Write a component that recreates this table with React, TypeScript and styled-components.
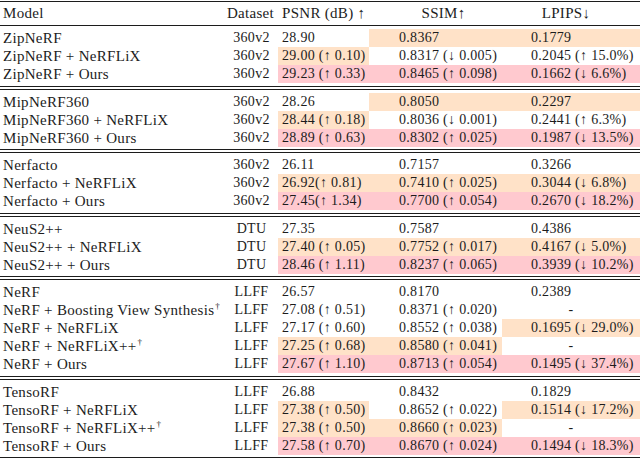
import React from 'react';
import styled, { createGlobalStyle } from 'styled-components';

const GlobalStyle = createGlobalStyle`
  body {
    margin: 0;
    background: #fff;
  }
`;

type Tone = 'n' | 'o' | 'p';

const toneColor = (t: Tone) => (t === 'o' ? '#ffe2c8' : t === 'p' ? '#ffc9cf' : 'transparent');

const COLS = '225px 53px 91px 133px 138px';

const Table = styled.div`
  width: 640px;
  padding-top: 1px;
  font-family: 'Liberation Serif', 'Times New Roman', serif;
  font-size: 14px;
  letter-spacing: 0.3px;
  color: #1c1c1c;
`;

const HeadRow = styled.div`
  display: grid;
  grid-template-columns: ${COLS};
  height: 23px;
  line-height: 23px;
  font-size: 15px;
  border-top: 1.5px solid #1c1c1c;
  border-bottom: 1px solid #1c1c1c;
`;

const Group = styled.div`
  padding: 3px 0 2.5px;
`;

const Divider = styled.div`
  height: 2px;
  border-top: 1px solid #1c1c1c;
  border-bottom: 1px solid #1c1c1c;
`;

const BottomRule = styled.div`
  border-top: 1.5px solid #1c1c1c;
`;

const Row = styled.div`
  display: grid;
  grid-template-columns: ${COLS};
  height: 18px;
  line-height: 18px;
`;

const ModelCell = styled.div`
  padding-left: 3px;
  font-size: 15px;
  white-space: nowrap;
`;

const SetCell = styled.div`
  text-align: center;
  white-space: nowrap;
`;

const ValueCell = styled.div<{ $tone?: Tone; $pad: number; $center?: boolean }>`
  background: ${p => toneColor(p.$tone ?? 'n')};
  padding-left: ${p => (p.$center ? 0 : p.$pad)}px;
  text-align: ${p => (p.$center ? 'center' : 'left')};
  white-space: nowrap;
`;

const HeadValue = styled.div<{ $center?: boolean; $shift?: number }>`
  padding-left: ${p => (p.$center ? 0 : 4)}px;
  text-align: ${p => (p.$center ? 'center' : 'left')};
  transform: translateX(${p => p.$shift ?? 0}px);
  white-space: nowrap;
`;

const Dag = styled.sup`
  font-size: 9px;
  line-height: 0;
  vertical-align: 6px;
  margin-left: 1px;
`;

type Entry = {
  model: React.ReactNode;
  set: string;
  psnr: [string, Tone];
  ssim: [string, Tone];
  lpips: [string, Tone];
};

const groups: Entry[][] = [
  [
    { model: 'ZipNeRF', set: '360v2', psnr: ['28.90', 'n'], ssim: ['0.8367', 'o'], lpips: ['0.1779', 'o'] },
    { model: 'ZipNeRF + NeRFLiX', set: '360v2', psnr: ['29.00 (↑ 0.10)', 'o'], ssim: ['0.8317 (↓ 0.005)', 'n'], lpips: ['0.2045 (↑ 15.0%)', 'n'] },
    { model: 'ZipNeRF + Ours', set: '360v2', psnr: ['29.23 (↑ 0.33)', 'p'], ssim: ['0.8465 (↑ 0.098)', 'p'], lpips: ['0.1662 (↓ 6.6%)', 'p'] },
  ],
  [
    { model: 'MipNeRF360', set: '360v2', psnr: ['28.26', 'n'], ssim: ['0.8050', 'o'], lpips: ['0.2297', 'o'] },
    { model: 'MipNeRF360 + NeRFLiX', set: '360v2', psnr: ['28.44 (↑ 0.18)', 'o'], ssim: ['0.8036 (↓ 0.001)', 'n'], lpips: ['0.2441 (↑ 6.3%)', 'n'] },
    { model: 'MipNeRF360 + Ours', set: '360v2', psnr: ['28.89 (↑ 0.63)', 'p'], ssim: ['0.8302 (↑ 0.025)', 'p'], lpips: ['0.1987 (↓ 13.5%)', 'p'] },
  ],
  [
    { model: 'Nerfacto', set: '360v2', psnr: ['26.11', 'n'], ssim: ['0.7157', 'n'], lpips: ['0.3266', 'n'] },
    { model: 'Nerfacto + NeRFLiX', set: '360v2', psnr: ['26.92(↑ 0.81)', 'o'], ssim: ['0.7410 (↑ 0.025)', 'o'], lpips: ['0.3044 (↓ 6.8%)', 'o'] },
    { model: 'Nerfacto + Ours', set: '360v2', psnr: ['27.45(↑ 1.34)', 'p'], ssim: ['0.7700 (↑ 0.054)', 'p'], lpips: ['0.2670 (↓ 18.2%)', 'p'] },
  ],
  [
    { model: 'NeuS2++', set: 'DTU', psnr: ['27.35', 'n'], ssim: ['0.7587', 'n'], lpips: ['0.4386', 'n'] },
    { model: 'NeuS2++ + NeRFLiX', set: 'DTU', psnr: ['27.40 (↑ 0.05)', 'o'], ssim: ['0.7752 (↑ 0.017)', 'o'], lpips: ['0.4167 (↓ 5.0%)', 'o'] },
    { model: 'NeuS2++ + Ours', set: 'DTU', psnr: ['28.46 (↑ 1.11)', 'p'], ssim: ['0.8237 (↑ 0.065)', 'p'], lpips: ['0.3939 (↓ 10.2%)', 'p'] },
  ],
  [
    { model: 'NeRF', set: 'LLFF', psnr: ['26.57', 'n'], ssim: ['0.8170', 'n'], lpips: ['0.2389', 'n'] },
    { model: <>NeRF + Boosting View Synthesis<Dag>†</Dag></>, set: 'LLFF', psnr: ['27.08 (↑ 0.51)', 'n'], ssim: ['0.8371 (↑ 0.020)', 'n'], lpips: ['-', 'n'] },
    { model: 'NeRF + NeRFLiX', set: 'LLFF', psnr: ['27.17 (↑ 0.60)', 'n'], ssim: ['0.8552 (↑ 0.038)', 'n'], lpips: ['0.1695 (↓ 29.0%)', 'o'] },
    { model: <>NeRF + NeRFLiX++<Dag>†</Dag></>, set: 'LLFF', psnr: ['27.25 (↑ 0.68)', 'o'], ssim: ['0.8580 (↑ 0.041)', 'o'], lpips: ['-', 'n'] },
    { model: 'NeRF + Ours', set: 'LLFF', psnr: ['27.67 (↑ 1.10)', 'p'], ssim: ['0.8713 (↑ 0.054)', 'p'], lpips: ['0.1495 (↓ 37.4%)', 'p'] },
  ],
  [
    { model: 'TensoRF', set: 'LLFF', psnr: ['26.88', 'n'], ssim: ['0.8432', 'n'], lpips: ['0.1829', 'n'] },
    { model: 'TensoRF + NeRFLiX', set: 'LLFF', psnr: ['27.38 (↑ 0.50)', 'o'], ssim: ['0.8652 (↑ 0.022)', 'n'], lpips: ['0.1514 (↓ 17.2%)', 'o'] },
    { model: <>TensoRF + NeRFLiX++<Dag>†</Dag></>, set: 'LLFF', psnr: ['27.38 (↑ 0.50)', 'o'], ssim: ['0.8660 (↑ 0.023)', 'o'], lpips: ['-', 'n'] },
    { model: 'TensoRF + Ours', set: 'LLFF', psnr: ['27.58 (↑ 0.70)', 'p'], ssim: ['0.8670 (↑ 0.024)', 'p'], lpips: ['0.1494 (↓ 18.3%)', 'p'] },
  ],
];

const App: React.FC = () => {
  return (
    <>
      <GlobalStyle />
      <Table>
        <HeadRow>
          <ModelCell>Model</ModelCell>
          <HeadValue $center $shift={-1}>Dataset</HeadValue>
          <HeadValue>PSNR (dB) ↑</HeadValue>
          <HeadValue $center $shift={8}>SSIM↑</HeadValue>
          <HeadValue $center $shift={-5}>LPIPS↓</HeadValue>
        </HeadRow>
        {groups.map((g, gi) => (
          <React.Fragment key={gi}>
            {gi > 0 && <Divider />}
            <Group>
              {g.map((r, ri) => (
                <Row key={ri}>
                  <ModelCell>{r.model}</ModelCell>
                  <SetCell>{r.set}</SetCell>
                  <ValueCell $pad={4} $tone={r.psnr[1]}>{r.psnr[0]}</ValueCell>
                  <ValueCell $pad={30} $tone={r.ssim[1]}>{r.ssim[0]}</ValueCell>
                  <ValueCell $pad={29} $tone={r.lpips[1]} $center={r.lpips[0] === '-'}>{r.lpips[0]}</ValueCell>
                </Row>
              ))}
            </Group>
          </React.Fragment>
        ))}
        <BottomRule />
      </Table>
    </>
  );
};

export default App;
